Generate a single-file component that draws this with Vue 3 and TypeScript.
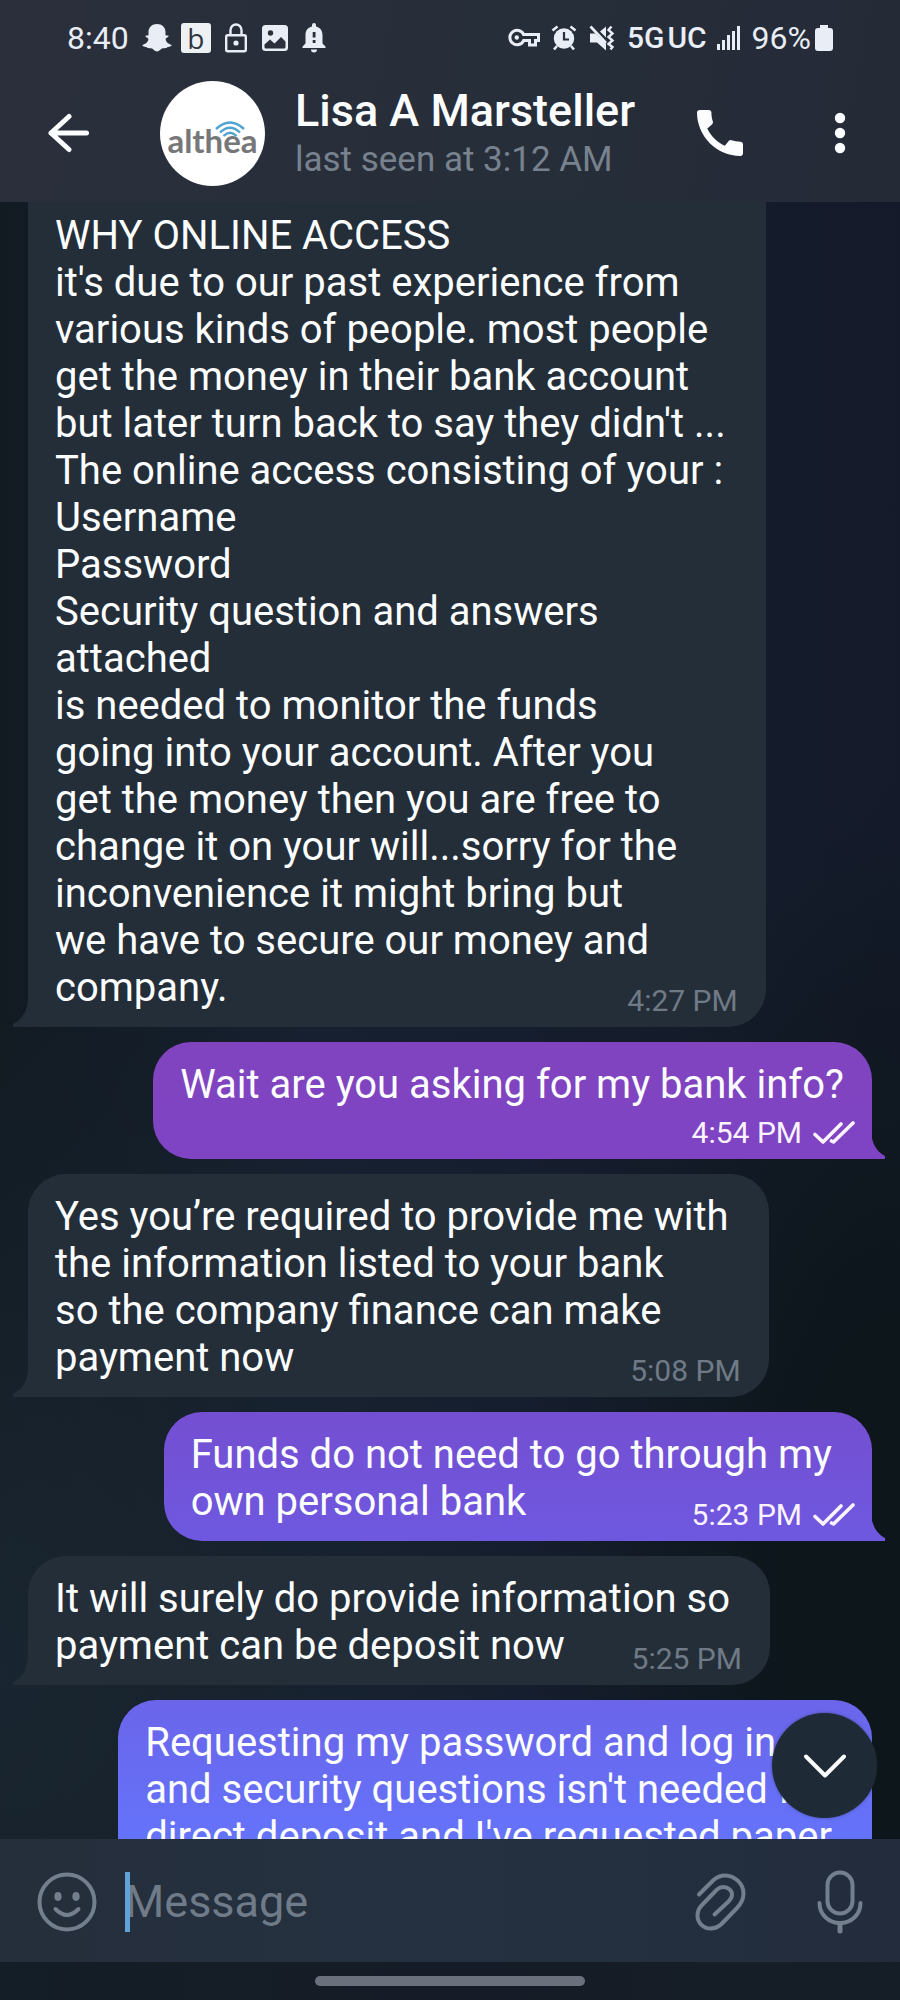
<script setup lang="ts">
import { ref } from 'vue'

interface Message {
  id: number
  outgoing: boolean
  text: string
  time: string
  layout?: 'clipped' | 'stacked'
}

const draft = ref('')

const messages: Message[] = [
  {
    id: 1,
    outgoing: false,
    layout: 'clipped',
    time: '4:27 PM',
    text: [
      'WHY ONLINE ACCESS',
      "it's due to our past experience from",
      'various kinds of people. most people',
      'get the money in their bank account',
      "but later turn back to say they didn't ...",
      'The online access consisting of your :',
      'Username',
      'Password',
      'Security question and answers',
      'attached',
      'is needed to monitor the funds',
      'going into your account. After you',
      'get the money then you are free to',
      'change it on your will...sorry for the',
      'inconvenience it might bring but',
      'we have to secure our money and',
      'company.',
    ].join('\n'),
  },
  { id: 2, outgoing: true, layout: 'stacked', time: '4:54 PM', text: 'Wait are you asking for my bank info?' },
  {
    id: 3,
    outgoing: false,
    time: '5:08 PM',
    text: 'Yes you’re required to provide me with\nthe information listed to your bank\nso the company finance can make\npayment now',
  },
  { id: 4, outgoing: true, time: '5:23 PM', text: 'Funds do not need to go through my\nown personal bank' },
  { id: 5, outgoing: false, time: '5:25 PM', text: 'It will surely do provide information so\npayment can be deposit now' },
  {
    id: 6,
    outgoing: true,
    time: '',
    text: "Requesting my password and log in\nand security questions isn't needed for\ndirect deposit and I've requested paper",
  },
]
</script>

<template>
  <div class="phone">
    <header class="top">
      <div class="status">
        <span class="clock">8:40</span>
        <svg class="ghost" width="30" height="30" viewBox="0 0 30 30" fill="currentColor">
          <path d="M15 1c5 0 8.500 3.300 8.500 8v3.200c1.300.4 2.800-.2 3 .9.200 1.200-2.700 1.600-2.900 2.900.4 3.400 3 5 5.900 5.900.6.500-.4 1.700-4.300 2.400-.8 1.200-2.300.8-4.200.9-2.300.3-3.400 3-6 3.200-2.600-.2-3.700-2.900-6-3.200-1.900-.1-3.400.3-4.200-.9C.9 23.600-.1 22.400.5 21.900c2.900-.9 5.500-2.500 5.900-5.900-.2-1.300-3.100-1.700-2.900-2.900.2-1.100 1.700-.5 3-.9V9c0-4.700 3.500-8 8.500-8z" />
        </svg>
        <span class="b-badge">b</span>
        <svg class="lock" width="22" height="30" viewBox="0 0 22 30" fill="none" stroke="currentColor" stroke-width="2.400">
          <rect x="1.200" y="12.200" width="19.600" height="16" rx="1.500" />
          <path d="M5.500 12V7a5.500 5.500 0 0 1 11 0v5" />
          <circle cx="11" cy="20" r="2.600" fill="currentColor" stroke="none" />
        </svg>
        <svg class="picture" width="26" height="26" viewBox="0 0 26 26">
          <rect width="26" height="26" rx="3.500" fill="currentColor" />
          <circle cx="8.500" cy="8" r="2.700" class="hole" />
          <path class="hole" d="M2.500 19.500 8 14.500l4.500 4L19 12l4.500 4.500V22q0 1.500-1.500 1.500H4q-1.500 0-1.500-1.500z" />
        </svg>
        <svg class="bell" width="24" height="30" viewBox="0 0 24 30">
          <path fill="currentColor" d="M12 0q2 0 2 2v1.600c4.400 1 6.500 4.400 6.500 8.600v8.300l3 3V25H.5v-1.500l3-3v-8.300c0-4.200 2.100-7.600 6.500-8.600V2q0-2 2-2zM9 26.500h6a3 3 0 0 1-6 0z" />
          <path class="hole" d="M10.700 9h2.800v5.500h-2.800zM10.700 17h2.800v3h-2.800z" />
        </svg>
        <span class="spacer"></span>
        <svg class="key" width="32" height="20" viewBox="0 0 32 20" fill="none" stroke="currentColor" stroke-width="3">
          <path d="M15.600 6.500H30.500v6h-3v4.500h-6v-4.500h-5.900a7.200 7.200 0 1 1 0-6z" />
          <circle cx="8.800" cy="9.500" r="2.200" fill="currentColor" stroke="none" />
        </svg>
        <svg class="alarm" width="26" height="26" viewBox="0 0 26 26">
          <circle cx="13" cy="13.500" r="10.200" fill="currentColor" />
          <path d="M1.500 5.500 6.500 1.500M24.500 5.500l-5-4M6 21l-3 3.500M20 21l3 3.500" stroke="currentColor" stroke-width="2.600" fill="none" />
          <path class="cut" d="M13 7v7.500h5" />
        </svg>
        <svg class="mute" width="26" height="26" viewBox="0 0 26 26">
          <path fill="currentColor" d="M1 8.500h5.500L17 19v6.500L8 17.500H1zM17 1.500V12.500l-6-6z" />
          <path d="M1.500 1.500 17 18" stroke="currentColor" stroke-width="2.600" />
          <path d="M22.500 1.500 19.500 5l4 3.500-4 3.500 4 3.500-4 3.500 4 3-2 2.500" fill="none" stroke="currentColor" stroke-width="2.400" />
        </svg>
        <span class="network"><span>5G</span><span>UC</span></span>
        <svg class="signal" width="23" height="26" viewBox="0 0 23 26" fill="currentColor">
          <path d="M0 19h3v6H0zM5 15h3v10H5zM10 10h3v15h-3zM15 6h3v19h-3zM20 1h3v24h-3z" />
        </svg>
        <span class="percent">96%</span>
        <svg class="battery" width="18" height="26" viewBox="0 0 18 26" fill="currentColor">
          <path d="M5 0h8v3h2q3 0 3 3v17q0 3-3 3H3q-3 0-3-3V6q0-3 3-3h2z" />
        </svg>
      </div>

      <div class="bar">
        <button class="icon-button" type="button" aria-label="Back">
          <svg width="42" height="40" viewBox="0 0 42 40" fill="none" stroke="currentColor" stroke-width="5" stroke-linecap="round" stroke-linejoin="round">
            <path d="M38.500 20H3M21 3.500 3 20l18 16.500" />
          </svg>
        </button>
        <div class="avatar">
          <svg class="waves" width="30" height="16" viewBox="0 0 30 16" fill="none" stroke="#4fa3d0" stroke-width="2.400">
            <path d="M1 8Q15-5 29 8M5 11.500Q15 2 25 11.500M8.500 15Q15 8.500 21.500 15" />
          </svg>
          <span>althea</span>
        </div>
        <div class="who">
          <h1>Lisa A Marsteller</h1>
          <p>last seen at 3:12 AM</p>
        </div>
        <button class="icon-button" type="button" aria-label="Call">
          <svg width="46" height="46" viewBox="3 3 18 18" fill="currentColor">
            <path d="M20.010 15.380c-1.230 0-2.420-.2-3.530-.56a.977.977 0 0 0-1.010.24l-1.570 1.970c-2.830-1.350-5.480-3.900-6.890-6.830l1.950-1.660c.27-.28.350-.67.240-1.020-.37-1.110-.56-2.300-.56-3.530 0-.54-.45-.99-.99-.99H4.190C3.650 3 3 3.240 3 3.990 3 13.280 10.730 21 20.010 21c.71 0 .99-.63.99-1.180v-3.450c0-.54-.45-.99-.99-.99z" />
          </svg>
        </button>
        <button class="icon-button more" type="button" aria-label="More options">
          <svg width="12" height="42" viewBox="0 0 12 42" fill="currentColor">
            <circle cx="6" cy="6" r="5.200" /><circle cx="6" cy="21" r="5.200" /><circle cx="6" cy="36" r="5.200" />
          </svg>
        </button>
      </div>
    </header>

    <main class="chat">
      <div class="list">
        <article
          v-for="m in messages"
          :key="m.id"
          class="bubble"
          :class="[m.outgoing ? 'out' : 'in', m.layout]"
        >
          <p class="text">{{ m.text }}</p>
          <span v-if="m.time" class="meta">
            <time>{{ m.time }}</time>
            <svg v-if="m.outgoing" width="42" height="24" viewBox="0 0 42 24" fill="none" stroke="currentColor" stroke-width="3.600" stroke-linecap="round" stroke-linejoin="round">
              <path d="M2 13.500l8 7.500L28 3M18.500 20l2 1L40 2" />
            </svg>
          </span>
        </article>
      </div>
      <button class="jump" type="button" aria-label="Scroll to bottom">
        <svg width="42" height="24" viewBox="0 0 42 24" fill="none" stroke="currentColor" stroke-width="4" stroke-linecap="round" stroke-linejoin="round">
          <path d="M2 2.500 21 21.500 40 2.500" />
        </svg>
      </button>
    </main>

    <form class="composer" @submit.prevent>
      <button class="icon-button" type="button" aria-label="Emoji">
        <svg width="60" height="60" viewBox="0 0 60 60" fill="none" stroke="currentColor" stroke-width="4" stroke-linecap="round">
          <circle cx="30" cy="30" r="27.500" />
          <ellipse cx="21" cy="24.500" rx="3.600" ry="4.400" fill="currentColor" stroke="none" />
          <ellipse cx="39" cy="24.500" rx="3.600" ry="4.400" fill="currentColor" stroke="none" />
          <path d="M18.500 37q11.500 12 23 0" />
        </svg>
      </button>
      <div class="field">
        <input v-model="draft" type="text" placeholder="Message" aria-label="Message" />
        <span class="caret"></span>
      </div>
      <button class="icon-button" type="button" aria-label="Attach">
        <svg width="51" height="60" viewBox="0 0 51 60" fill="none" stroke="currentColor" stroke-width="4" stroke-linecap="round">
          <path d="M4 22.500 18 8.500C22 5 26 3.500 30 3.500c10 0 18.500 8.500 18.500 18 0 6.500-3 11-7 15L27 51.500c-3.500 3.500-7 5-11.500 5-7 0-13-5.500-13-13 0-4.500 1.500-7.500 4.500-10.500L22 17.500c2-1.800 4-2.500 6.500-2.500 4.500 0 8.500 3.500 8.500 7.500 0 3-1.500 5-3.500 7L19.500 42.500" />
        </svg>
      </button>
      <button class="icon-button mic" type="button" aria-label="Record voice message">
        <svg width="46" height="64" viewBox="0 0 46 64" fill="none" stroke="currentColor" stroke-width="4" stroke-linecap="round">
          <rect x="10.500" y="2.500" width="25" height="41" rx="12.500" />
          <path d="M2.500 33c0 12 9.500 20 20.500 20s20.500-8 20.500-20" />
          <path d="M23 54v7" stroke-width="5" />
        </svg>
      </button>
    </form>
    <div class="nav"><span></span></div>
  </div>
</template>

<style>
html,
body {
  margin: 0;
  background: #141e28;
}
</style>

<style scoped>
* {
  box-sizing: border-box;
}
.phone {
  display: flex;
  flex-direction: column;
  height: 100vh;
  overflow: hidden;
  font-family: Roboto, 'Liberation Sans', sans-serif;
  color: #fbfdff;
}
p,
h1 {
  margin: 0;
}
button {
  padding: 0;
  border: 0;
  background: none;
  color: inherit;
  font: inherit;
}
svg {
  display: block;
  flex: none;
}
.top {
  flex: none;
  background: linear-gradient(100deg, #2a2f3b, #262e3a 60%, #252a37);
}
.status {
  display: flex;
  align-items: center;
  height: 64px;
  padding: 12px 67px 0;
  color: #e9edf5;
  font-size: 32px;
  line-height: 38px;
}
.ghost {
  margin-left: 13px;
}
.b-badge {
  width: 30px;
  height: 30px;
  margin-left: 9px;
  border-radius: 3px;
  background: #eef1f4;
  color: #30353f;
  font-family: 'Open Sans', sans-serif;
  font-size: 28px;
  line-height: 30px;
  text-align: center;
}
.lock {
  margin-left: 14px;
}
.picture {
  margin-left: 15px;
}
.bell {
  margin-left: 14px;
}
.hole {
  fill: #2a2f3b;
}
.cut {
  fill: none;
  stroke: #272e3a;
  stroke-width: 2.2px;
}
.spacer {
  flex: 1;
}
.alarm {
  margin-left: 11px;
}
.mute {
  margin-left: 12px;
}
.network {
  display: flex;
  gap: 3px;
  margin-left: 12px;
  font-size: 30px;
  font-weight: 500;
}
.signal {
  margin-left: 10px;
}
.percent {
  margin-left: 12px;
}
.battery {
  margin-left: 4px;
}
.bar {
  display: flex;
  align-items: center;
  height: 138px;
  padding: 0 54px 0 48px;
}
.icon-button {
  flex: none;
}
.avatar {
  position: relative;
  display: flex;
  flex: none;
  align-items: center;
  justify-content: center;
  width: 105px;
  height: 105px;
  margin: 0 30px 0 70px;
  padding-top: 14px;
  border-radius: 50%;
  background: #fff;
  color: #77777a;
  font-family: Lato, sans-serif;
  font-size: 33px;
  font-weight: 700;
  line-height: 40px;
}
.waves {
  position: absolute;
  top: 40px;
  left: 55px;
}
.who {
  flex: 1;
  min-width: 0;
  padding-top: 2px;
}
h1 {
  font-size: 45px;
  font-weight: 500;
  line-height: 52px;
}
.who p {
  color: #78828e;
  font-size: 35px;
  line-height: 46px;
}
.more {
  margin-left: 91px;
}
.chat {
  position: relative;
  flex: 1;
  min-height: 0;
  overflow: hidden;
  background:
    radial-gradient(ellipse 60% 40% at 0 90%, #192530, #19253000),
    radial-gradient(ellipse 40% 50% at 100% 85%, #0d161b 30%, #0d161b00),
    linear-gradient(90deg, #121b22, #162030 35%, #141a2a);
}
.list {
  display: flex;
  flex-direction: column;
  gap: 15px;
  padding: 0 28px;
}
.bubble {
  --fill: linear-gradient(#242e39, #242e39);
  position: relative;
  width: fit-content;
  padding: 19px 40px 16px 27px;
  border-radius: 38px;
  background: var(--fill) fixed;
}
.bubble::after {
  content: '';
  position: absolute;
  bottom: 0;
  width: 15px;
  height: 26px;
  background: var(--fill) fixed;
}
.in {
  border-bottom-left-radius: 0;
}
.in::after {
  left: -15px;
  clip-path: path('M15 0Q13 17 0 23V26H15Z');
}
.out {
  --fill: linear-gradient(#8144bf 52%, #7e44c4 58%, #744fd2 71%, #6e58e0 77%, #6b65ea 85%, #6473fa 92%);
  align-self: flex-end;
  border-bottom-right-radius: 0;
}
.out::after {
  right: -14px;
  clip-path: path('M0 0Q2 17 14 23V26H0Z');
}
.clipped {
  padding-top: 10px;
  border-top-left-radius: 0;
  border-top-right-radius: 0;
}
.stacked {
  padding-right: 28px;
  padding-bottom: 51px;
}
.text {
  font-size: 40px;
  line-height: 47px;
  white-space: pre;
}
.meta {
  position: absolute;
  right: 28px;
  bottom: 8px;
  display: flex;
  align-items: center;
  gap: 11px;
  color: #6f7a86;
  font-size: 30px;
  line-height: 36px;
}
.out .meta {
  right: 17px;
  color: #fbf3ff;
}
.jump {
  position: absolute;
  right: 23px;
  bottom: 21px;
  display: flex;
  align-items: center;
  justify-content: center;
  width: 105px;
  height: 105px;
  border-radius: 50%;
  background: #1f2a37;
  box-shadow: 0 0 3px #1f2a3788;
}
.composer {
  display: flex;
  flex: none;
  align-items: center;
  height: 123px;
  padding: 2px 37px 0;
  background: linear-gradient(90deg, #252e3b, #253140 40%, #222c3d);
  color: #737f8d;
}
.field {
  position: relative;
  flex: 1;
  min-width: 0;
  margin-left: 28px;
}
input {
  display: block;
  width: 100%;
  height: 60px;
  padding: 0;
  border: 0;
  outline: 0;
  background: none;
  color: #fbfdff;
  font: 45px/60px Roboto, 'Liberation Sans', sans-serif;
}
input::placeholder {
  color: #6f7b88;
  opacity: 1;
}
.caret {
  position: absolute;
  top: 0;
  left: 0;
  width: 5px;
  height: 60px;
  background: #5fa3d9;
}
.mic {
  margin-left: 71px;
}
.nav {
  display: flex;
  flex: none;
  justify-content: center;
  height: 38px;
  padding-top: 14px;
  background: linear-gradient(90deg, #141e26, #161c27 50%, #151e26);
}
.nav span {
  width: 30%;
  height: 10px;
  border-radius: 5px;
  background: #6a717c;
}
</style>
